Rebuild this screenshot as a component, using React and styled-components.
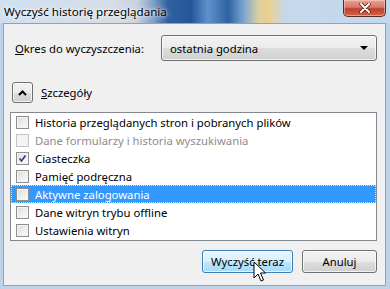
import styled, { createGlobalStyle, css } from "styled-components";

const Global = createGlobalStyle`
  html, body {
    margin: 0;
    padding: 0;
    width: 390px;
    height: 289px;
    overflow: hidden;
    font-family: "Segoe UI", "Noto Sans", "Liberation Sans", sans-serif;
    font-size: 11.3px;
    color: #000;
  }
`;

const Window = styled.div`
  position: relative;
  width: 390px;
  height: 289px;
  display: flex;
  flex-direction: column;
  background: #bcd3ea;
`;

const TitleBar = styled.div`
  height: 23px;
  flex-shrink: 0;
  display: flex;
  align-items: flex-start;
  justify-content: space-between;
  padding-left: 4px;
  background: linear-gradient(90deg, #cfe0f1 0%, #d6dee8 28%, #c9d3de 35%, #7d9cc4 39.5%, #2f609f 43%, #25569a 49%, #5f92cc 53.3%, #2f62a2 58.5%, #7fa6d2 62.6%, #d9cfa0 66.2%, #ecd08c 68.7%, #c6d8ec 73.3%, #c2d8ef 100%);
`;

const Title = styled.span`
  margin-top: 4px;
  font-size: 11.6px;
  color: #000;
  text-shadow: 0 0 6px rgba(255, 255, 255, 0.9), 0 0 3px rgba(255, 255, 255, 0.9);
`;

const CloseButton = styled.div`
  width: 43px;
  height: 17px;
  margin-right: 4px;
  border: 1px solid #5d2a22;
  border-top: none;
  border-radius: 0 0 5px 5px;
  box-sizing: border-box;
  background: linear-gradient(180deg, #e8a293 0%, #d47a68 45%, #c0402a 55%, #d2634b 100%);
  box-shadow: inset 0 0 0 1px rgba(255, 220, 210, 0.5);
  display: flex;
  align-items: center;
  justify-content: center;
`;

const Panel = styled.div`
  flex: 1;
  margin: 0 4px 3px 3px;
  border: 1px solid #8ea3bb;
  background: #f0f0f0;
  display: flex;
  flex-direction: column;
  padding: 11px 8px 0 6px;
`;

const PeriodRow = styled.div`
  display: flex;
  align-items: center;
  height: 26px;
`;

const Label = styled.span`
  margin-left: 5px;
  width: 146px;
`;

const Select = styled.div`
  flex: 1;
  height: 26px;
  box-sizing: border-box;
  border: 1px solid #707070;
  border-radius: 3px;
  background: linear-gradient(180deg, #f2f2f2 0%, #ebebeb 50%, #dddddd 51%, #cfcfcf 100%);
  box-shadow: inset 0 0 0 1px rgba(255, 255, 255, 0.7);
  display: flex;
  align-items: center;
  justify-content: space-between;
  padding: 0 8px 0 8px;
`;

const Arrow = styled.span`
  width: 0;
  height: 0;
  border-left: 4px solid transparent;
  border-right: 4px solid transparent;
  border-top: 4px solid #000;
`;

const DetailsRow = styled.div`
  display: flex;
  align-items: center;
  margin-top: 21px;
  height: 21px;
  padding-left: 2px;
`;

const ToggleButton = styled.div`
  width: 21px;
  height: 21px;
  box-sizing: border-box;
  border: 1px solid #707070;
  border-radius: 3px;
  background: linear-gradient(180deg, #f2f2f2 0%, #ebebeb 50%, #dddddd 51%, #cfcfcf 100%);
  box-shadow: inset 0 0 0 1px rgba(255, 255, 255, 0.7);
  display: flex;
  align-items: center;
  justify-content: center;
`;

const DetailsLabel = styled.span`
  margin-left: 8px;
`;

const ListBox = styled.div`
  margin-top: 9px;
  height: 129px;
  box-sizing: border-box;
  border: 1px solid #828790;
  background: #fff;
  padding: 1px 0;
  display: flex;
  flex-direction: column;
`;

const Item = styled.div`
  height: 18px;
  display: flex;
  align-items: center;
  padding-left: 5px;
  box-sizing: border-box;
  color: ${(p) => (p.$disabled ? "#8d8d8d" : "#000")};
  ${(p) =>
    p.$selected &&
    css`
      background: #3399ff;
      color: #fff;
      outline: 1px dotted #c8e0ff;
      outline-offset: -1px;
    `}
`;

const Box = styled.span`
  width: 13px;
  height: 13px;
  box-sizing: border-box;
  border: 1px solid ${(p) => (p.$disabled ? "#c4c4c4" : "#8e8f8f")};
  background: ${(p) =>
    p.$disabled
      ? "#f4f4f4"
      : "linear-gradient(135deg, #dcdcdc 0%, #f0f0f0 60%, #fdfdfd 100%)"};
  box-shadow: inset 0 0 0 1px #f4f4f4;
  margin-right: 6px;
  display: flex;
  align-items: center;
  justify-content: center;
  flex-shrink: 0;
`;

const ItemText = styled.span`
  white-space: nowrap;
`;

const Footer = styled.div`
  display: flex;
  justify-content: flex-end;
  gap: 9px;
  margin-top: 9px;
`;

const Button = styled.div`
  height: 23px;
  box-sizing: border-box;
  border: 1px solid ${(p) => (p.$hover ? "#3c7fb1" : "#707070")};
  border-radius: 3px;
  width: ${(p) => p.$width}px;
  display: flex;
  align-items: center;
  justify-content: center;
  background: ${(p) =>
    p.$hover
      ? "linear-gradient(180deg, #eaf6fd 0%, #d9f0fc 50%, #bee6fd 51%, #a7d9f5 100%)"
      : "linear-gradient(180deg, #f2f2f2 0%, #ebebeb 50%, #dddddd 51%, #cfcfcf 100%)"};
  box-shadow: inset 0 0 0 1px rgba(255, 255, 255, 0.7);
`;

const Cursor = styled.svg`
  position: absolute;
  left: 253px;
  top: 261px;
`;

const Underline = styled.span`
  text-decoration: underline;
`;

const items = [
  { text: "Historia przeglądanych stron i pobranych plików" },
  { text: "Dane formularzy i historia wyszukiwania", disabled: true },
  { text: "Ciasteczka", checked: true },
  { text: "Pamięć podręczna" },
  { text: "Aktywne zalogowania", selected: true },
  { text: "Dane witryn trybu offline" },
  { text: "Ustawienia witryn" },
];

export default function App() {
  return (
    <>
      <Global />
      <Window>
        <TitleBar>
          <Title>Wyczyść historię przeglądania</Title>
          <CloseButton>
            <svg width="12" height="10" viewBox="0 0 12 10">
              <path d="M2 1 L10 9 M10 1 L2 9" stroke="#4a1a12" strokeWidth="3.4" strokeLinecap="round" />
              <path d="M2 1 L10 9 M10 1 L2 9" stroke="#fff" strokeWidth="2" strokeLinecap="round" />
            </svg>
          </CloseButton>
        </TitleBar>
        <Panel>
          <PeriodRow>
            <Label>
              <Underline>O</Underline>kres do wyczyszczenia:
            </Label>
            <Select>
              <span>ostatnia godzina</span>
              <Arrow />
            </Select>
          </PeriodRow>
          <DetailsRow>
            <ToggleButton>
              <svg width="9" height="6" viewBox="0 0 9 6">
                <path d="M1 5 L4.5 1.5 L8 5" fill="none" stroke="#000" strokeWidth="2" />
              </svg>
            </ToggleButton>
            <DetailsLabel>
              <Underline>S</Underline>zczegóły
            </DetailsLabel>
          </DetailsRow>
          <ListBox>
            {items.map((item, index) => (
              <Item key={index} $disabled={item.disabled} $selected={item.selected}>
                <Box $disabled={item.disabled}>
                  {item.checked && (
                    <svg width="9" height="9" viewBox="0 0 9 9">
                      <path d="M1.5 4.5 L3.5 7 L7.5 1.5" fill="none" stroke="#2a3f7a" strokeWidth="1.6" />
                    </svg>
                  )}
                </Box>
                <ItemText>{item.text}</ItemText>
              </Item>
            ))}
          </ListBox>
          <Footer>
            <Button $hover $width={91}>Wyczyść teraz</Button>
            <Button $width={75}>Anuluj</Button>
          </Footer>
        </Panel>
        <Cursor width="14" height="24" viewBox="0 0 14 24">
          <path d="M1 1 L1 17 L5 13 L8 20 L10.5 19 L7.5 12 L12.5 12 Z" fill="#fff" stroke="#000" strokeWidth="1" strokeLinejoin="round" />
        </Cursor>
      </Window>
    </>
  );
}
